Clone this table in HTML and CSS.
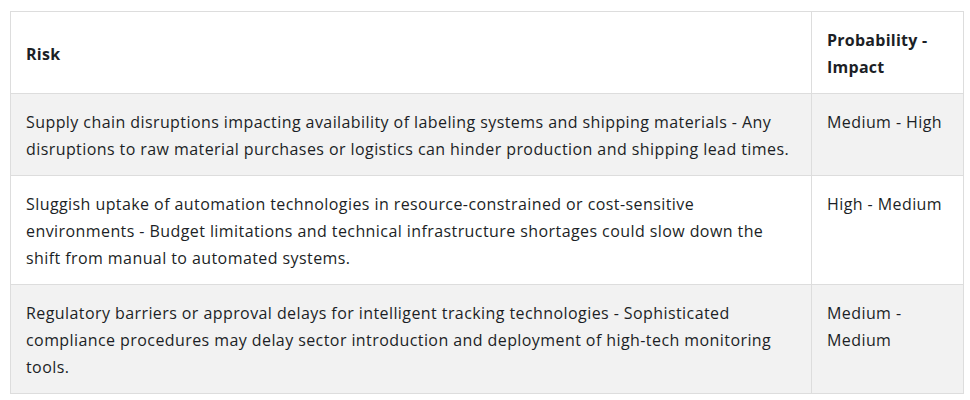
FILE: index.html
```html
<!DOCTYPE html>
<html lang="en">
<head>
<meta charset="utf-8">
<title>Risks</title>
<link rel="stylesheet" href="styles.css">
</head>
<body>
<table class="risk-table">
  <thead>
    <tr>
      <th class="col-risk">Risk</th>
      <th class="col-prob">Probability - Impact</th>
    </tr>
  </thead>
  <tbody>
    <tr>
      <td>Supply chain disruptions impacting availability of labeling systems and shipping materials - Any disruptions to raw material purchases or logistics can hinder production and shipping lead times.</td>
      <td>Medium - High</td>
    </tr>
    <tr>
      <td>Sluggish uptake of automation technologies in resource-constrained or cost-sensitive environments - Budget limitations and technical infrastructure shortages could slow down the shift from manual to automated systems.</td>
      <td>High - Medium</td>
    </tr>
    <tr>
      <td>Regulatory barriers or approval delays for intelligent tracking technologies - Sophisticated compliance procedures may delay sector introduction and deployment of high-tech monitoring tools.</td>
      <td>Medium - Medium</td>
    </tr>
  </tbody>
</table>
</body>
</html>
```
FILE: styles.css
```css
html, body {
  margin: 0;
  background: #ffffff;
}
body {
  padding: 11px 0 0 10px;
  font-family: "Segoe UI", "Open Sans", "Noto Sans", sans-serif;
  font-size: 16px;
  letter-spacing: 0.42px;
  color: #1c1f26;
}
.risk-table {
  width: 954px;
  border-collapse: collapse;
  table-layout: fixed;
}
.risk-table th,
.risk-table td {
  border: 1px solid #dddddd;
  padding: 15px 15px 12px 15px;
  line-height: 27px;
  text-align: left;
  vertical-align: top;
}
.risk-table th {
  font-weight: 700;
  letter-spacing: 0.25px;
  vertical-align: middle;
}
.col-prob {
  width: 121px;
}
.risk-table tbody tr:nth-child(odd) td {
  background: #f2f2f2;
}
```
